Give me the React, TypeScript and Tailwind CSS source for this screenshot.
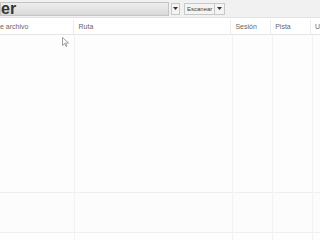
import React from 'react';

const cols = [
  { label: 'e archivo', w: 'w-[75px]' },
  { label: 'Ruta', w: 'w-[158px]' },
  { label: 'Sesión', w: 'w-[40px]' },
  { label: 'Pista', w: 'w-[40px]' },
  { label: 'U', w: 'flex-1' },
];

const Arrow: React.FC = () => (
  <svg width="5" height="3" viewBox="0 0 5 3">
    <path d="M0 0h5L2.5 3z" fill="#333" />
  </svg>
);

const App: React.FC = () => {
  return (
    <div className="w-[320px] h-[240px] overflow-hidden bg-white relative font-['Liberation_Sans',sans-serif]">
      {/* Toolbar */}
      <div className="h-[18px] bg-[#f1f1f1] flex items-center gap-[2px] border-b border-[#e3e3e3]">
        <div className="w-[169px] h-[14px] border border-[#c4c4c4] bg-gradient-to-b from-[#eeeeee] to-[#d9d9d9] flex items-center overflow-hidden">
          <span className="text-[16px] font-bold text-[#333] leading-none">er</span>
        </div>
        <div className="w-[9px] h-[12px] border border-[#c8c8c8] bg-[#f4f4f4] flex items-center justify-center">
          <Arrow />
        </div>
        <div className="ml-[2px] flex items-center border border-[#c8c8c8] bg-[#f4f4f4] h-[12px]">
          <span className="px-[2px] text-[6px] text-[#444] leading-none">Escanear</span>
          <div className="w-[10px] h-full border-l border-[#c8c8c8] flex items-center justify-center">
            <Arrow />
          </div>
        </div>
      </div>

      {/* Header */}
      <div className="h-[15px] mt-[2px] flex border-b border-[#e6e6e6] bg-white">
        {cols.map((c, i) => (
          <div
            key={i}
            className={`${c.w} h-full flex items-center text-[7px] text-[#666] ${i === 0 ? 'pl-0' : 'pl-[4px]'} ${i < cols.length - 1 ? 'border-r border-[#ececec]' : ''}`}
          >
            {c.label}
          </div>
        ))}
      </div>

      {/* Body */}
      <div className="flex h-[210px]">
        {cols.map((c, i) => (
          <div key={i} className={`${c.w} h-full flex flex-col ${i < cols.length - 1 ? 'border-r border-[#f2f2f2]' : ''}`}>
            <div className="h-[157px] bg-[#fdfdfd]" />
            <div className="h-px bg-[#efefef]" />
            <div className="h-[39px] bg-[#fcfcfc]" />
            <div className="h-px bg-[#efefef]" />
            <div className="flex-1 bg-[#fdfdfd]" />
          </div>
        ))}
      </div>

      {/* Mouse pointer */}
      <svg className="absolute left-[62px] top-[37px]" width="7" height="10" viewBox="0 0 7 10">
        <path d="M0.5 0.5v8l2-2 1.5 3 1-0.5-1.5-3h3z" fill="#fff" stroke="#888" strokeWidth="0.8" />
      </svg>
    </div>
  );
};

export default App;
